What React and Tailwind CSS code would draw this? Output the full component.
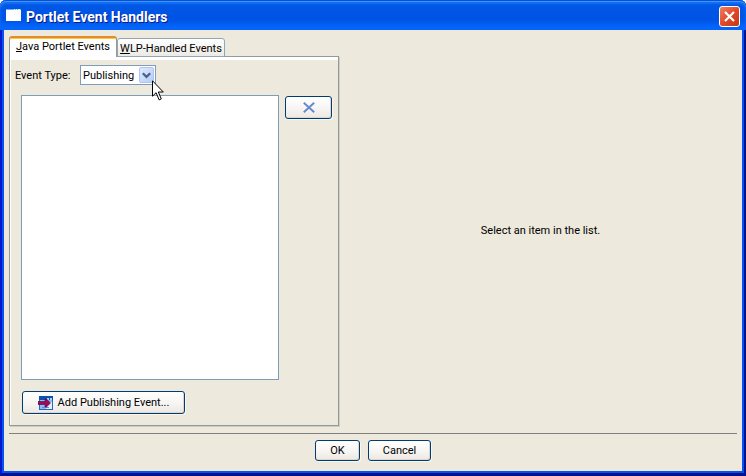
import { useState } from "react";

const xpButton =
  "flex items-center justify-center rounded-[3px] border border-[#003c74] bg-linear-to-b from-white via-[#f8f6f4] to-[#ece8e2] shadow-[inset_-1px_-1px_0_#dcd6cc,1px_1px_0_#f8f6f0] whitespace-nowrap";

function TitleBar() {
  return (
    <header className="flex h-[30px] items-center rounded-t-[6px] bg-linear-to-b from-[#0058e6] from-0% via-[#0055e5] via-40% to-[#0050e0] pr-[6px] pl-[6px] shadow-[inset_0_1px_0_#0a4fd0,inset_0_2px_0_#3c96ff,inset_0_4px_2px_#1470f4,inset_0_-7px_5px_#0466fb]">
      <svg width="15" height="12" viewBox="0 0 15 12" className="shrink-0" aria-hidden="true">
        <rect width="15" height="12" fill="#fff" />
        <rect width="15" height="1" fill="#5fb0f8" />
        <path d="M8 .5h1M10 .5h1M12 .5h2" stroke="#e8f4ff" />
      </svg>
      <h1 className="ml-[5px] flex-1 pt-[4px] font-['Roboto','Noto_Sans',sans-serif] text-[14px] leading-[18px] font-bold text-white [text-shadow:1px_1px_0_#0a1883]">
        Portlet Event Handlers
      </h1>
      <button
        type="button"
        aria-label="Close"
        className="mt-[3px] flex size-[21px] items-center justify-center rounded-[3px] border border-white bg-linear-to-br from-[#ee8060] via-[#e0492a] to-[#c23a10]"
      >
        <svg width="13" height="13" viewBox="0 0 13 13" aria-hidden="true">
          <path d="M2 2l9 9M11 2l-9 9" stroke="#fff" strokeWidth="2.2" />
        </svg>
      </button>
    </header>
  );
}

function Tabs({ tab, onChange }) {
  const active =
    "h-[21px] border-x border-t-2 border-x-[#919b9c] border-t-[#e68b2c] bg-[#fefefe] pb-[2px] shadow-[inset_0_1px_0_#ffc73c]";
  const idle =
    "h-[19px] border border-[#91a7b4] bg-linear-to-b from-white to-[#eceae4] pt-[2px]";
  return (
    <div role="tablist" className="flex h-[20px] items-end">
      <button
        type="button"
        role="tab"
        aria-selected={tab === 0}
        onClick={() => onChange(0)}
        className={"relative z-10 -mb-px w-[108px] rounded-t-[3px] text-center whitespace-nowrap " + (tab === 0 ? active : idle)}
      >
        <u className="[text-decoration-skip-ink:none]">J</u>ava Portlet Events
      </button>
      <button
        type="button"
        role="tab"
        aria-selected={tab === 1}
        onClick={() => onChange(1)}
        className={"relative -mb-px w-[108px] rounded-t-[3px] text-center whitespace-nowrap " + (tab === 1 ? active : idle)}
      >
        <u className="[text-decoration-skip-ink:none]">W</u>LP-Handled Events
      </button>
    </div>
  );
}

function Pointer() {
  return (
    <svg
      width="12"
      height="21"
      viewBox="0 0 12 21"
      className="pointer-events-none absolute top-[15px] left-[72px] z-20"
      aria-hidden="true"
    >
      <path
        d="M.5.8v15.4l3.6-3.5 3 7.2 2.2-1-3-6.9h5z"
        fill="#fff"
        stroke="#000"
      />
    </svg>
  );
}

function EventType() {
  return (
    <div className="flex h-[20px] items-center pl-[5px]">
      <label htmlFor="event-type" className="w-[65px] pt-[2px] whitespace-nowrap">
        Event Type:
      </label>
      <div className="relative h-[20px] w-[76px]">
        <select
          id="event-type"
          className="block h-full w-full appearance-none border border-[#7f9db9] bg-white pt-[2px] pl-[2px] outline-none"
        >
          <option>Publishing</option>
          <option>Processing</option>
        </select>
        <span className="pointer-events-none absolute top-[2px] right-[2px] flex h-[16px] w-[15px] items-center justify-center rounded-[2px] border border-[#b0c4f4] bg-linear-to-br from-[#e0eafe] to-[#b4ccf8]">
          <svg width="9" height="7" viewBox="0 0 9 7" aria-hidden="true">
            <path d="M.8 1.2l3.7 3.7 3.7-3.7" fill="none" stroke="#4d6185" strokeWidth="2.2" />
          </svg>
        </span>
        <Pointer />
      </div>
    </div>
  );
}

function AddIcon() {
  return (
    <svg width="15" height="14" viewBox="0 0 15 14" className="shrink-0" aria-hidden="true">
      <rect x="1" width="14" height="14" fill="#2a66c8" />
      <rect x="2" y="4" width="12" height="9" fill="#8fbcf0" />
      <rect x="8" y="6" width="6" height="7" fill="#e4f0ff" />
      <rect x="1" width="14" height="4" fill="#0d50b0" />
      <path d="M9 3h2M12 3h2" stroke="#a8d8ff" strokeWidth="2" />
      <path d="M4 11.5h7" stroke="#5f8cd0" />
      <path d="M0 5.5h7V3h1.500l4 4-4 4H7V8.500H0z" fill="#a0085c" stroke="#3c1030" strokeWidth=".6" />
    </svg>
  );
}

export default function App() {
  const [tab, setTab] = useState(0);
  return (
    <div className="flex min-h-screen flex-col bg-white font-['Roboto','Noto_Sans',sans-serif] text-[11px] leading-[14px] text-black">
      <div className="flex flex-1 flex-col rounded-t-[6px] bg-[#0046e0]">
        <TitleBar />
        <div className="flex flex-1 flex-col border-x-2 border-b-3 border-l-[#0019cf] border-r-[#00138c] border-b-[#00138c]">
          <div className="flex flex-1 flex-col border-x-2 border-b-2 border-[#0a50ee] bg-[#ede9dc]">
            <main className="flex flex-1 pt-[6px] pl-[5px]">
              <div className="flex w-[330px] shrink-0 flex-col">
                <Tabs tab={tab} onChange={setTab} />
                <section
                  role="tabpanel"
                  className="flex flex-1 flex-col border border-[#919b9c] pt-[8px] pb-[11px] shadow-[inset_1px_0_0_#fff,inset_0_3px_0_#fff,1px_1px_0_#d0ccbe]"
                >
                  <EventType />
                  <div className="mt-[10px] flex flex-1 items-start gap-[6px] pr-[6px] pl-[11px]">
                    <ul
                      aria-label="Events"
                      className="min-h-[120px] flex-1 self-stretch border border-[#7f9db9] bg-white"
                    />
                    <button type="button" aria-label="Remove" className={xpButton + " mt-px h-[23px] w-[47px]"}>
                      <svg width="12" height="11" viewBox="0 0 12 11" aria-hidden="true">
                        <path d="M.8.8l10.4 9.4M11.2.8L.8 10.2" stroke="#6688cc" strokeWidth="1.9" />
                      </svg>
                    </button>
                  </div>
                  <div className="mt-[11px] pl-[12px]">
                    <button type="button" className={xpButton + " h-[23px] w-[163px] gap-[5px]"}>
                      <AddIcon />
                      Add Publishing Event...
                    </button>
                  </div>
                </section>
              </div>
              <section className="flex flex-1 items-center justify-center">
                <p>Select an item in the list.</p>
              </section>
            </main>
            <footer className="mx-[5px] mt-[7px] flex justify-center gap-[8px] border-t border-[#808080] pt-[6px] pb-[10px]">
              <button type="button" className={xpButton + " h-[21px] w-[45px]"}>
                OK
              </button>
              <button type="button" className={xpButton + " h-[21px] w-[63px]"}>
                Cancel
              </button>
            </footer>
          </div>
        </div>
      </div>
    </div>
  );
}
